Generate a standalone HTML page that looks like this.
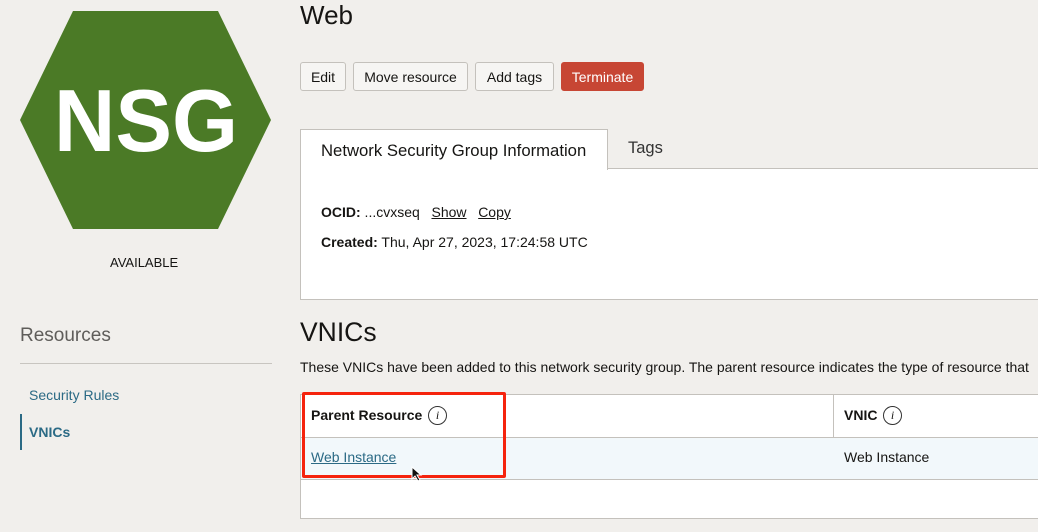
<!DOCTYPE html>
<html><head><style>
body{margin:0;width:1038px;height:532px;overflow:hidden;background:#f1efec;font-family:"Liberation Sans",sans-serif;color:#161513;position:relative}
.a{position:absolute}
.btn{position:absolute;top:62px;height:29px;border:1px solid #c4c1bc;background:#f6f5f3;border-radius:3px;font-size:14px;line-height:29px;text-align:center;color:#161513;box-sizing:border-box}
</style></head><body>
<svg class="a" style="left:0;top:0" width="290" height="240"><polygon points="20,120 73,11 218,11 271,120 218,229 73,229" fill="#4b7a26"/><text x="146" y="151" text-anchor="middle" font-family="Liberation Sans" font-weight="bold" font-size="88" textLength="184" lengthAdjust="spacingAndGlyphs" fill="#fff">NSG</text></svg>
<div class="a" style="left:110px;top:255px;font-size:13px">AVAILABLE</div>
<div class="a" style="left:20px;top:325px;font-size:19px;color:#5f5d5a">Resources</div>
<div class="a" style="left:20px;top:363px;width:252px;height:1px;background:#c8c5c0"></div>
<div class="a" style="left:29px;top:387px;font-size:14px;color:#2b6a85">Security Rules</div>
<div class="a" style="left:20px;top:414px;width:2px;height:36px;background:#2b6a85"></div>
<div class="a" style="left:29px;top:424px;font-size:14px;font-weight:bold;color:#2b6a85">VNICs</div>
<div class="a" style="left:300px;top:0px;font-size:26px">Web</div>
<div class="btn" style="left:300px;width:46px">Edit</div>
<div class="btn" style="left:353px;width:115px">Move resource</div>
<div class="btn" style="left:475px;width:79px">Add tags</div>
<div class="btn" style="left:561px;width:83px;background:#c74634;border-color:#c74634;color:#fff">Terminate</div>
<div class="a" style="left:300px;top:168px;width:740px;height:130px;background:#fff;border:1px solid #c4c1bc;border-right:none"></div>
<div class="a" style="left:300px;top:129px;width:308px;height:41px;background:#fff;border:1px solid #c4c1bc;border-bottom:none;font-size:16.7px;line-height:41px;padding-left:20px;box-sizing:border-box;white-space:nowrap">Network Security Group Information</div>
<div class="a" style="left:628px;top:139px;font-size:16.5px;color:#333">Tags</div>
<div class="a" style="left:321px;top:204px;font-size:14px"><b>OCID:</b> ...cvxseq &nbsp; <u>Show</u> &nbsp; <u>Copy</u></div>
<div class="a" style="left:321px;top:234px;font-size:14px"><b>Created:</b> Thu, Apr 27, 2023, 17:24:58 UTC</div>
<div class="a" style="left:300px;top:317px;font-size:26.5px">VNICs</div>
<div class="a" style="left:300px;top:359px;font-size:14px;white-space:nowrap">These VNICs have been added to this network security group. The parent resource indicates the type of resource that</div>
<div class="a" style="left:300px;top:394px;width:740px;height:125px;background:#fff;border:1px solid #c4c1bc;border-right:none;box-sizing:border-box"></div>
<div class="a" style="left:301px;top:437px;width:737px;height:41px;background:#f2f8fb;border-top:1px solid #c4c1bc;border-bottom:1px solid #c4c1bc"></div>
<div class="a" style="left:833px;top:395px;width:1px;height:42px;background:#c4c1bc"></div>
<div class="a" style="left:311px;top:407px;font-size:14px;font-weight:bold">Parent Resource</div>
<div class="a" style="left:428px;top:406px;width:17px;height:17px;border:1px solid #333;border-radius:50%;font:italic 12px 'Liberation Serif',serif;text-align:center;line-height:17px">i</div>
<div class="a" style="left:844px;top:407px;font-size:14px;font-weight:bold">VNIC</div>
<div class="a" style="left:883px;top:406px;width:17px;height:17px;border:1px solid #333;border-radius:50%;font:italic 12px 'Liberation Serif',serif;text-align:center;line-height:17px">i</div>
<div class="a" style="left:311px;top:449px;font-size:14px;color:#2b6a85;text-decoration:underline">Web Instance</div>
<div class="a" style="left:844px;top:449px;font-size:14px">Web Instance</div>
<div class="a" style="left:302px;top:392px;width:198px;height:80px;border:3px solid #f5230d;border-radius:2px"></div>
<svg class="a" style="left:411px;top:466px" width="12" height="16"><path d="M1 1 L1 13 L4 10 L7 15 L9 14 L6 9 L10 9 Z" fill="#111" stroke="#fff" stroke-width="1"/></svg>
</body></html>
